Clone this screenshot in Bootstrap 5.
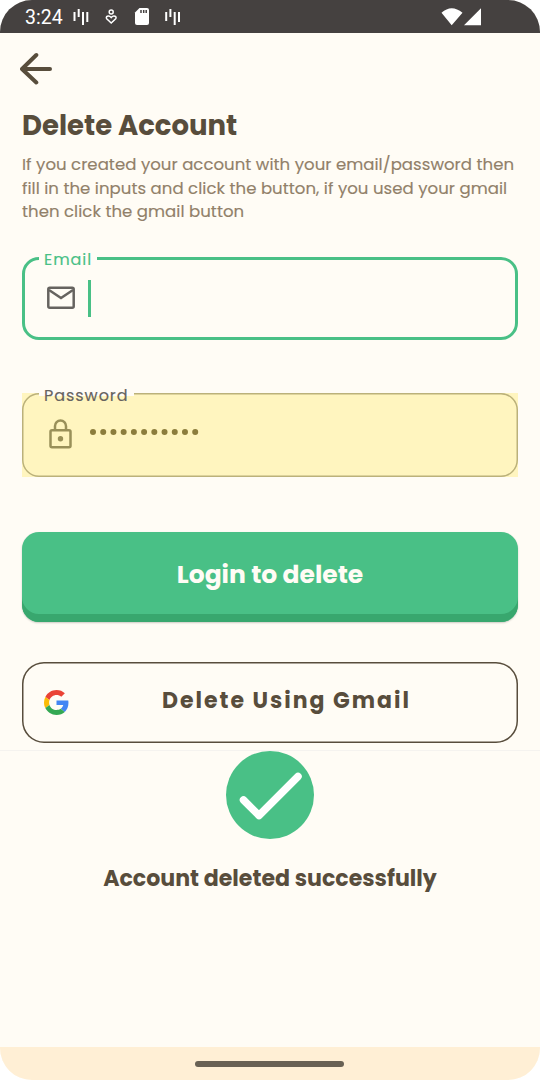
<!DOCTYPE html>
<html lang="en">
<head>
<meta charset="utf-8">
<meta name="viewport" content="width=device-width, initial-scale=1">
<title>Delete Account</title>
<link rel="stylesheet" href="https://cdn.jsdelivr.net/npm/bootstrap@5.3.0/dist/css/bootstrap.min.css">
<style>
  :root { --cream:#fffcf5; --brown:#584d3c; --green:#49c086; }
  body { background:#fff; font-family:Poppins, Inter, sans-serif; color:var(--brown); }
  svg { display:block; flex:none; }
  .phone { width:540px; height:1080px; background:var(--cream); border-radius:32px; }
  .status { height:33px; background:#454140; color:#fff; }
  .clock { font:400 19.5px/33px Roboto, sans-serif; margin-left:25px; width:48px; padding-top:1px; }
  .screen { padding:19px 22px 0; height:717px; }
  .title { font-size:27.5px; line-height:34px; font-weight:700; margin:23px 0 0; }
  .intro { font-size:16.55px; line-height:23.6px; font-weight:400; letter-spacing:.04px; color:#918069; -webkit-text-stroke:.15px #918069; margin:10px 0 0; }
  .intro span { display:block; white-space:nowrap; }
  .field { height:83px; border-radius:17px; z-index:0; }
  .field-email { border:3px solid var(--green); margin-top:33px; padding:0 0 0 21.5px; }
  .field-pass-wrap { background:#fff5bf; margin-top:53px; height:84px; }
  .field-pass { height:84px; box-shadow:inset 0 0 0 1.5px #bbb17a; padding:0 0 2px 27px; }
  .tag-label { font-size:16px; line-height:20px; font-weight:400; letter-spacing:.95px; -webkit-text-stroke:.15px; left:14px; top:-10px; height:20px; padding:0 5px; white-space:nowrap; }
  .field-pass .tag-label { left:17px; top:-7px; }
  .tag-label::before { content:""; position:absolute; z-index:-1; left:0; right:0; top:5px; height:7px; background:var(--cream); }
  .field-pass .tag-label::before { top:6px; height:4px; }
  .caret { width:3px; height:37px; background:var(--green); margin-left:13.5px; }
  .btn-main { height:90px; margin-top:55px; border-radius:17px; background:var(--green); border:0; color:var(--cream); font-size:25px; font-weight:700; padding:0 0 5px; box-shadow:inset 0 -8px #38a76e, 0 1px 2px #0003; }
  .btn-gmail { height:81px; margin-top:40px; border-radius:22px; border:0; box-shadow:inset 0 0 0 1.5px var(--brown); background:none; color:var(--brown); font-size:22px; font-weight:700; letter-spacing:1.97px; }
  .google-mark { left:22px; }
  .gmail-text { margin-left:33px; padding-bottom:4px; }
  .sheet { height:297px; border-top:1px solid #f5f3ef; }
  .done { font-size:22.1px; line-height:30px; font-weight:700; margin-top:24px; padding-top:1px; white-space:nowrap; }
  .navbar-strip { height:33px; background:#ffefd5; }
  .handle { width:149px; height:6px; border-radius:3px; background:#696154; margin-right:1px; }
</style>
</head>
<body>
<main class="phone overflow-hidden d-flex flex-column">
  <header class="status d-flex align-items-center flex-shrink-0">
    <span class="clock">3:24</span>
    <svg width="112" height="20" viewBox="73 7 112 20" fill="none" stroke="#fff" stroke-width="2">
      <path d="M74.500 12v9M78.700 9v8M83 12v13M87.300 12v10"/>
      <path d="M166.200 12v9M170.400 9v8M174.700 12v13M179 12v10"/>
      <g stroke-width="1.500"><circle cx="111.200" cy="12" r="2"/><path d="M111.200 23l-4.500-4.200c-1.500-2 1.800-4.300 4.500-1.200 2.700-3.100 6-.8 4.500 1.200z"/></g>
      <path d="M139.500 8h7.500q2 0 2 2v13q0 2-2 2h-10q-2 0-2-2v-10.500z" fill="#fff" stroke="none"/>
      <path d="M141 10v3M143.700 10v3M146.200 10v3" stroke="#454140" stroke-width="1.500"/>
    </svg>
    <svg class="ms-auto" style="margin-right:58px" width="41" height="18" viewBox="441 7.700 41 18" fill="#fff"><path d="M441.500 12.500q10-9 21 0L451.700 25zM464 25l17-17v17z"/></svg>
  </header>
  <section class="screen flex-shrink-0">
    <svg width="34" height="34" viewBox="22 52 34 34" fill="none" stroke="#584d3c" stroke-width="4" stroke-linecap="round" stroke-linejoin="round" style="margin-left:-2px"><path d="M38.300 55L24 69l14.300 13.500M24 69h28"/></svg>
    <h1 class="title">Delete Account</h1>
    <p class="intro"><span>If you created your account with your email/password then</span><span>fill in the inputs and click the button, if you used your gmail</span><span>then click the gmail button</span></p>
    <div class="field field-email position-relative d-flex align-items-center">
      <span class="tag-label position-absolute" style="color:#49c086">Email</span>
      <svg width="28" height="24" viewBox="0 0 28 24" fill="none" stroke="#66635f" stroke-width="2.500"><rect x="1.300" y="1.700" width="25.400" height="20" rx="1.500"/><path d="M2 4l12 8 12-8"/></svg>
      <span class="caret"></span>
    </div>
    <div class="field-pass-wrap">
      <div class="field field-pass position-relative d-flex align-items-center">
        <span class="tag-label position-absolute" style="color:#66635f">Password</span>
        <svg width="24" height="30" viewBox="0 0 24 30" fill="none" stroke="#999059" stroke-width="2.500"><rect x="1.500" y="11.300" width="20" height="17" rx="1.500"/><path d="M6 11V7a5.500 5.500 0 0 1 11 0v4"/><circle cx="11.500" cy="19.700" r="2.700" fill="#999059" stroke="none"/></svg>
        <svg width="112" height="8" viewBox="0 0 112 8" style="margin:0 0 3px 16px"><path d="M4 4H108" stroke="#8c7d3c" stroke-width="6" stroke-linecap="round" stroke-dasharray="0 10.220"/></svg>
      </div>
    </div>
    <button class="btn-main btn w-100 d-block">Login to delete</button>
    <button class="btn-gmail btn w-100 position-relative d-flex align-items-center justify-content-center p-0">
      <svg class="google-mark position-absolute" width="25" height="25" viewBox="0 0 48 48"><path fill="#ea4335" d="M24 9.500c3.540 0 6.710 1.220 9.210 3.600l6.850-6.850C35.900 2.380 30.470 0 24 0 14.620 0 6.510 5.380 2.560 13.220l7.980 6.190C12.430 13.720 17.740 9.500 24 9.500z"/><path fill="#4285f4" d="M46.980 24.550c0-1.570-.15-3.090-.38-4.550H24v9.020h12.940c-.58 2.960-2.260 5.480-4.780 7.180l7.730 6c4.510-4.180 7.090-10.360 7.090-17.650z"/><path fill="#fbbc05" d="M10.530 28.590c-.48-1.450-.76-2.990-.76-4.590s.27-3.140.76-4.590l-7.980-6.190C.92 16.460 0 20.120 0 24c0 3.880.92 7.540 2.560 10.780l7.970-6.190z"/><path fill="#34a853" d="M24 48c6.480 0 11.930-2.130 15.890-5.810l-7.730-6c-2.150 1.450-4.920 2.300-8.160 2.300-6.260 0-11.570-4.220-13.470-9.910l-7.980 6.190C6.510 42.620 14.620 48 24 48z"/></svg>
      <span class="gmail-text">Delete Using Gmail</span>
    </button>
  </section>
  <section class="sheet d-flex flex-column align-items-center flex-shrink-0">
    <svg width="88" height="88" viewBox="0 0 88 88"><circle cx="44" cy="44" r="44" fill="#49c086"/><path d="M17.500 49L33 64.500 72 25.500" fill="none" stroke="#fff" stroke-width="7.500" stroke-linecap="round" stroke-linejoin="round"/></svg>
    <div class="done">Account deleted successfully</div>
  </section>
  <footer class="navbar-strip d-flex align-items-center justify-content-center flex-shrink-0"><span class="handle"></span></footer>
</main>
<script src="https://cdn.jsdelivr.net/npm/bootstrap@5.3.0/dist/js/bootstrap.bundle.min.js"></script>
</body>
</html>
